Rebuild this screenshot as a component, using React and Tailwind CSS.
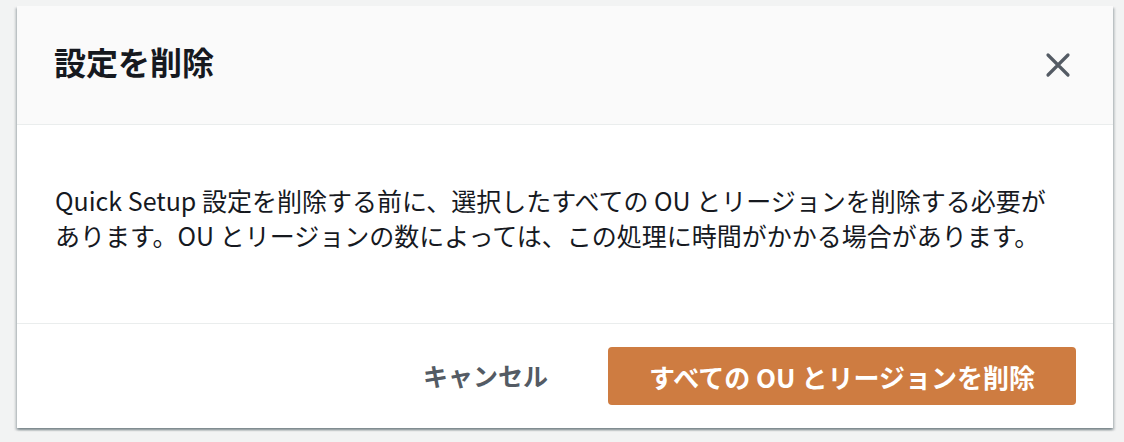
const font = { fontFamily: '"Noto Sans CJK JP", "Noto Sans", sans-serif' };

const CloseIcon = () => (
  <svg viewBox="0 0 26 26" className="h-[26px] w-[26px]" fill="none" aria-hidden="true">
    <path d="M3 3l20 20M23 3L3 23" stroke="#545b64" strokeWidth="3.2" strokeLinecap="round" />
  </svg>
);

const App = () => {
  return (
    <div className="h-[442px] w-[1124px] overflow-hidden bg-[#f2f3f3] pl-[17px] pt-[6px]" style={font}>
      <div className="w-[1096px] bg-white shadow-[0_2px_2px_rgba(0,28,36,0.3),2px_2px_2px_rgba(0,28,36,0.15),-2px_2px_2px_rgba(0,28,36,0.15)]">
        <header className="flex h-[119px] items-center justify-between border-b border-[#eaeded] bg-[#fafafa] pl-[37px] pr-[40px]">
          <h1 className="pb-[8px] text-[32px] font-bold leading-none text-[#16191f]">設定を削除</h1>
          <button type="button" className="grid h-[30px] w-[30px] place-items-center" aria-label="閉じる">
            <CloseIcon />
          </button>
        </header>

        <div className="flex h-[199px] items-center border-b border-[#eaeded] px-[38px] pb-[12px]">
          <p className="whitespace-nowrap text-[25px] leading-[35px] text-[#16191f]">
            Quick Setup 設定を削除する前に、選択したすべての OU とリージョンを削除する必要が
            <br />
            あります。OU とリージョンの数によっては、この処理に時間がかかる場合があります。
          </p>
        </div>

        <footer className="flex h-[104px] items-center justify-end gap-[60px] pr-[37px]">
          <button type="button" className="text-[25px] font-bold text-[#545b64]">キャンセル</button>
          <button type="button" className="h-[58px] w-[468px] rounded-[4px] bg-[#ce7c41] text-[26px] font-bold text-white">
            すべての OU とリージョンを削除
          </button>
        </footer>
      </div>
    </div>
  );
};

export default App;
